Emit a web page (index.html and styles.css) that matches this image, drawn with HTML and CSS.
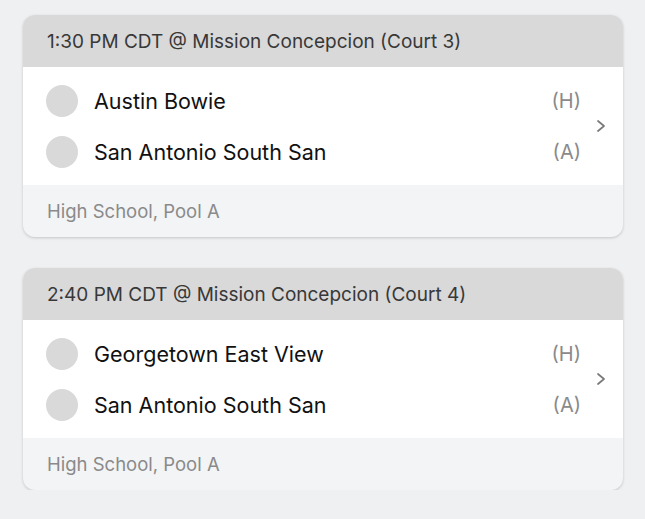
FILE: index.html
```html
<!DOCTYPE html>
<html lang="en">

<head>
    <meta charset="UTF-8">
    <meta name="viewport" content="width=device-width, initial-scale=1.0">
    <title>Schedule</title>
    <link rel="stylesheet" href="styles.css">
</head>

<body>
    <div id="game-list">
        <div class="game-card">
            <div class="game-header">1:30 PM CDT @ Mission Concepcion (Court 3)</div>
            <div class="game-body">
                <div class="team-list">
                    <div class="team-row">
                        <span class="team-logo"></span>
                        <span class="team-name">Austin Bowie</span>
                        <span class="team-side">(H)</span>
                    </div>
                    <div class="team-row">
                        <span class="team-logo"></span>
                        <span class="team-name">San Antonio South San</span>
                        <span class="team-side">(A)</span>
                    </div>
                </div>
                <svg class="chevron" viewBox="0 0 10 12" width="10" height="12">
                    <path d="M2 1 L8 6 L2 11" fill="none" stroke="#7a7a7a" stroke-width="1.7" stroke-linecap="round" stroke-linejoin="round"/>
                </svg>
            </div>
            <div class="game-footer">High School, Pool A</div>
        </div>

        <div class="game-card">
            <div class="game-header">2:40 PM CDT @ Mission Concepcion (Court 4)</div>
            <div class="game-body">
                <div class="team-list">
                    <div class="team-row">
                        <span class="team-logo"></span>
                        <span class="team-name">Georgetown East View</span>
                        <span class="team-side">(H)</span>
                    </div>
                    <div class="team-row">
                        <span class="team-logo"></span>
                        <span class="team-name">San Antonio South San</span>
                        <span class="team-side">(A)</span>
                    </div>
                </div>
                <svg class="chevron" viewBox="0 0 10 12" width="10" height="12">
                    <path d="M2 1 L8 6 L2 11" fill="none" stroke="#7a7a7a" stroke-width="1.7" stroke-linecap="round" stroke-linejoin="round"/>
                </svg>
            </div>
            <div class="game-footer">High School, Pool A</div>
        </div>
    </div>
</body>

</html>
```

FILE: styles.css
```css
body {
    margin: 0;
    background: #eff0f2;
    font-family: "Inter", "Lato", sans-serif;
}

#game-list {
    display: flex;
    flex-direction: column;
    gap: 31px;
    padding: 15px 22px 0 23px;
}

.game-card {
    border-radius: 12px;
    overflow: hidden;
    background: #f3f4f6;
    box-shadow: 0 1px 3px rgba(0, 0, 0, 0.18);
}

.game-header {
    height: 52px;
    display: flex;
    align-items: center;
    padding-left: 24px;
    background: #d9d9d9;
    color: #383838;
    font-size: 19px;
}

.game-body {
    display: flex;
    align-items: center;
    background: #ffffff;
    padding: 8px 0;
}

.team-list {
    flex: 1;
    padding-left: 23px;
}

.team-row {
    height: 51px;
    display: flex;
    align-items: center;
}

.team-logo {
    width: 32px;
    height: 32px;
    border-radius: 50%;
    background: #d9d9d9;
    margin-right: 16px;
}

.team-name {
    flex: 1;
    color: #111111;
    font-size: 21.5px;
}

.team-side {
    color: #8a8a8a;
    font-size: 20px;
}

.chevron {
    margin: 0 17px 0 15px;
}

.game-footer {
    height: 52px;
    display: flex;
    align-items: center;
    padding-left: 24px;
    color: #8a8a8a;
    font-size: 18.5px;
}
```
